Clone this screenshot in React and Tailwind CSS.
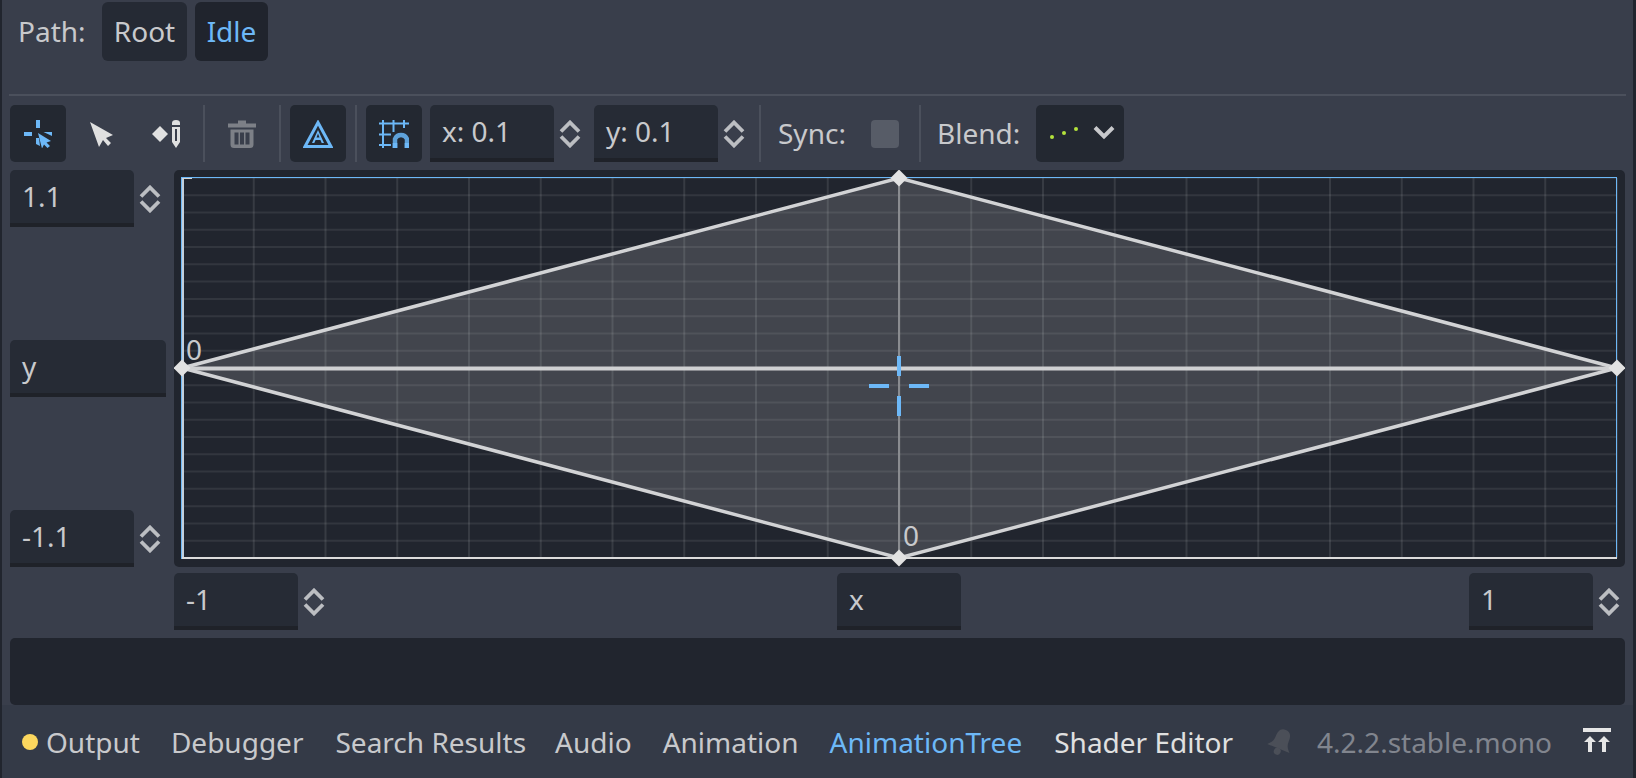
import React from "react";

const BLUE = "#6db8f7";

function Sep() {
  return <div className="w-[2px] h-[57px] bg-[#4b505c]" />;
}

function IconBtn({ active, className = "w-[56px]", children }) {
  return (
    <div className={"h-[57px] flex items-center justify-center rounded-[5px] shrink-0 " + className + (active ? " bg-[#232831]" : "")}>
      {children}
    </div>
  );
}

function Icon({ children, w = 28, h = 28, vb = "0 0 28 28", className = "" }) {
  return (
    <svg width={w} height={h} viewBox={vb} className={"block " + className}>
      {children}
    </svg>
  );
}

function Arrows() {
  return (
    <div className="w-[32px] h-[57px] flex items-center justify-center shrink-0">
      <svg width="22" height="28" viewBox="0 0 22 28" className="block">
        <path d="M2 11.5 L11 2.5 L20 11.5 M2 16.5 L11 25.5 L20 16.5" fill="none" stroke="#bcbec2" strokeWidth="3.8" />
      </svg>
    </div>
  );
}

function Field({ text, className = "w-[124px]" }) {
  return (
    <div className={"h-[57px] shrink-0 bg-[#262b35] rounded-t-[5px] border-b-[4px] border-[#1f2229] flex items-center pl-[12px] pb-[2px] text-[#c8c9cc] " + className}>
      <span className="leading-none">{text}</span>
    </div>
  );
}

function Spin({ text }) {
  return (
    <div className="flex shrink-0">
      <Field text={text} />
      <Arrows />
    </div>
  );
}

function Chart() {
  const xs = Array.from({ length: 21 }, (_, i) => 182 + i * 71.75);
  const ys = Array.from({ length: 23 }, (_, i) => 178 + i * 17.27);
  return (
    <svg viewBox="174 170 1451 397" className="block w-full h-full">
      {xs.map((x, i) => (
        <line key={i} x1={x} x2={x} y1="178" y2="558" stroke="#ffffff" strokeOpacity="0.1" strokeWidth="2" />
      ))}
      {ys.map((y, i) => (
        <line key={i} x1="182" x2="1617" y1={y} y2={y} stroke="#ffffff" strokeOpacity="0.08" strokeWidth="2" />
      ))}
      <polygon points="182,368 899,178 1617,368 899,558" fill="#ffffff" fillOpacity="0.15" />
      <rect x="181" y="177" width="1" height="382" fill={BLUE} />
      <rect x="182" y="177" width="2" height="382" fill="#c3cfdb" />
      <rect x="181" y="177" width="1436" height="1" fill={BLUE} />
      <rect x="182" y="178" width="10" height="1" fill="#d5d5d5" />
      <rect x="1616" y="177" width="1" height="381" fill={BLUE} />
      <rect x="182" y="557" width="1435" height="2" fill="#dcdcdc" />
      <line x1="899" x2="899" y1="178" y2="558" stroke="#8a8c90" strokeWidth="2" />
      <line x1="182" x2="1617" y1="368.5" y2="368.5" stroke="#cfd0d2" strokeWidth="4" />
      <polygon points="182,368 899,178 1617,368 899,558" fill="none" stroke="#d2d3d5" strokeWidth="3.5" />
      {[[899, 178], [182, 368], [1617, 368], [899, 558]].map(([x, y], i) => (
        <polygon key={i} points={`${x - 8.5},${y} ${x},${y - 8.5} ${x + 8.5},${y} ${x},${y + 8.5}`} fill="#e2e2e2" />
      ))}
      <g fill={BLUE}>
        <rect x="897" y="356" width="4" height="20" />
        <rect x="897" y="396" width="4" height="20" />
        <rect x="869" y="384" width="20" height="4" />
        <rect x="909" y="384" width="20" height="4" />
      </g>
    </svg>
  );
}

export default function App() {
  return (
    <div className="w-[1636px] h-[778px] overflow-hidden flex flex-col bg-[#393e4b] border-l-2 border-r-[3px] border-[#21252e] px-2 text-[28px] leading-none text-[#c8c9cc] font-['Noto_Sans',sans-serif]">
      <div className="h-[59px] mt-[2px] flex items-center shrink-0">
        <span className="ml-[8px] w-[84px] pb-[2px]">Path:</span>
        <div className="w-[85px] h-[59px] rounded-[6px] bg-[#252a34] flex items-center justify-center pb-[2px]">Root</div>
        <div className="ml-2 w-[73px] h-[59px] rounded-[6px] bg-[#20242d] flex items-center justify-center pb-[2px] text-[#6db8f7]">Idle</div>
      </div>

      <div className="h-[2px] mt-[33px] mx-[-1px] bg-[#4b505c] shrink-0" />

      <div className="mt-[9px] h-[57px] flex items-center shrink-0">
        <IconBtn active>
          <Icon>
            <g fill={BLUE}>
              <rect x="12" y="0" width="4" height="8" />
              <rect x="0" y="12" width="8" height="4" />
              <path d="M14 13 L27 21 L22.5 22.5 L26 26 L23.5 28 L20 24.5 L18 28.5 Z" />
              <path d="M19.5 12 L28 12 L28 16 Z" />
              <path d="M12 18 L15 18 L16 26 L12 24 Z" />
            </g>
          </Icon>
        </IconBtn>
        <IconBtn className="ml-2 w-[56px]">
          <Icon>
            <path d="M2 2 L25 15 L18 18 L23 23 L20 26 L15 20 L11 27 Z" fill="#e0e0e0" />
          </Icon>
        </IconBtn>
        <IconBtn className="ml-2 w-[56px]">
          <Icon vb="0 0 28 28">
            <polygon points="0,14 8,6 16,14 8,22" fill="#e0e0e0" />
            <path d="M20 3 Q20 0 24 0 Q28 0 28 3 L28 5 L20 5 Z" fill="#e0e0e0" />
            <path d="M20 7 H28 V22 L24 28 L20 22 Z M23 9 V21 H25 V9 Z" fill="#e0e0e0" fillRule="evenodd" />
          </Icon>
        </IconBtn>
        <div className="ml-[9px]"><Sep /></div>
        <IconBtn className="ml-[9px] w-[56px]">
          <Icon>
            <path d="M0 3.5 H10 V0.5 H18 V3.5 H28 V7.5 H0 Z M2.5 9.5 H25.5 V24.5 Q25.5 28 22 28 H6 Q2.5 28 2.5 24.5 Z M6.5 12.5 V24.5 H10.5 V12.5 Z M12 12.5 V24.5 H16 V12.5 Z M17.5 12.5 V24.5 H21.5 V12.5 Z" fill="#7d8087" fillRule="evenodd" />
          </Icon>
        </IconBtn>
        <div className="ml-[9px]"><Sep /></div>
        <IconBtn active className="ml-[9px] w-[56px]">
          <Icon w={30} vb="0 0 30 28">
            <path d="M15 2.5 L28 26.5 H2 Z" fill="none" stroke={BLUE} strokeWidth="3" />
            <path d="M15 10 L21 23 H18.7 L17.4 20 H12.6 L11.3 23 H9 Z M15 13.5 L13.5 17.5 H16.5 Z" fill={BLUE} fillRule="evenodd" />
          </Icon>
        </IconBtn>
        <div className="ml-[9px]"><Sep /></div>
        <IconBtn active className="ml-[9px] w-[56px]">
          <Icon w={30} vb="0 0 30 28">
            <path d="M4 -1 V28 M14.5 -1 V12 M25 -1 V8 M0 3.5 H30 M0 14.5 H12 M0 25 H12" stroke={BLUE} strokeWidth="2" fill="none" />
            <path d="M16 28 V19 A6.5 6.5 0 0 1 28 19 V28" fill="none" stroke="#5ea1d9" strokeWidth="4.5" />
            <rect x="13.7" y="23" width="4.6" height="5" fill={BLUE} />
            <rect x="25.7" y="23" width="4.6" height="5" fill={BLUE} />
          </Icon>
        </IconBtn>
        <div className="ml-2"><Spin text="x: 0.1" /></div>
        <div className="ml-2"><Spin text="y: 0.1" /></div>
        <div className="ml-[9px]"><Sep /></div>
        <span className="ml-[17px] w-[93px] pb-[2px]">Sync:</span>
        <div className="w-[28px] h-[28px] rounded-[4px] bg-[#575c67]" />
        <div className="ml-[20px]"><Sep /></div>
        <span className="ml-[16px] w-[99px] pb-[2px]">Blend:</span>
        <div className="w-[88px] h-[57px] rounded-[5px] bg-[#232831] flex items-center">
          <svg width="88" height="57" viewBox="0 0 88 57" className="block">
            <circle cx="16" cy="32" r="2" fill="#b4e33c" />
            <circle cx="28" cy="28" r="2" fill="#b4e33c" />
            <circle cx="40" cy="24" r="2" fill="#b4e33c" />
            <path d="M59 22.5 L68 31.5 L77 22.5" fill="none" stroke="#c8c9cc" strokeWidth="4" />
          </svg>
        </div>
      </div>

      <div className="mt-2 h-[397px] flex gap-2 shrink-0">
        <div className="w-[156px] flex flex-col justify-between shrink-0">
          <Spin text="1.1" />
          <Field text="y" className="w-[156px]" />
          <Spin text="-1.1" />
        </div>
        <div className="relative flex-1 min-w-0 bg-[#21252e] rounded-[5px] overflow-hidden">
          <Chart />
          <span className="absolute left-[12px] top-[165px] leading-none text-[#c8c9cc]">0</span>
          <span className="absolute left-[729px] top-[351px] leading-none text-[#c8c9cc]">0</span>
        </div>
      </div>

      <div className="mt-[6px] h-[57px] ml-[164px] flex justify-between shrink-0">
        <Spin text="-1" />
        <Field text="x" className="w-[124px] -ml-px" />
        <Spin text="1" />
      </div>

      <div className="mt-2 h-[67px] bg-[#21252e] rounded-[5px] shrink-0" />

      <div className="flex-1 -mx-2 px-2 bg-[#343a47] flex items-center pt-px">
        <span className="ml-3 w-4 h-4 rounded-full bg-[#fcd75e] shrink-0" />
        <span className="ml-[8px]">Output</span>
        <span className="ml-[31px]">Debugger</span>
        <span className="ml-[32px]">Search Results</span>
        <span className="ml-[29px]">Audio</span>
        <span className="ml-[31px]">Animation</span>
        <span className="ml-[31px] text-[#6db8f7]">AnimationTree</span>
        <span className="ml-[32px] text-[#e0e0e0]">Shader Editor</span>
        <span className="ml-[34px]">
          <svg width="28" height="30" viewBox="0 0 28 30" className="block">
            <g transform="rotate(22 14 15)" fill="#4b4f58">
              <path d="M14 2 C8 2 7 7 7 12 C7 17 5 19 2 22 H26 C23 19 21 17 21 12 C21 7 20 2 14 2 Z" />
              <circle cx="14" cy="25" r="3.5" />
            </g>
          </svg>
        </span>
        <span className="ml-[22px] text-[#81858e]">4.2.2.stable.mono</span>
        <span className="ml-auto mr-[14px] mb-[4px]">
          <svg width="28" height="24" viewBox="0 0 28 24" className="block">
            <g fill="#e6e6e6">
              <rect x="0" y="0" width="28" height="4" />
              <path d="M7 8 L13 14 H9 V24 H5 V14 H1 Z" />
              <path d="M21 8 L27 14 H23 V24 H19 V14 H15 Z" />
            </g>
          </svg>
        </span>
      </div>
    </div>
  );
}
